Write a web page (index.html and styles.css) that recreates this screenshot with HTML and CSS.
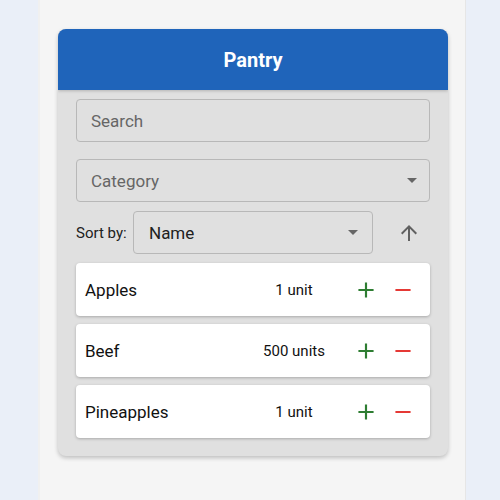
FILE: index.html
```html
<!DOCTYPE html>
<html>
<head>
<meta charset="utf-8">
<link rel="stylesheet" href="styles.css">
</head>
<body>
<div class="page">
  <div class="column">
    <div class="card">
      <div class="header">Pantry</div>
      <div class="body">
        <div class="field"><span class="placeholder">Search</span></div>
        <div class="field select"><span class="placeholder">Category</span><span class="caret"></span></div>
        <div class="sortrow">
          <span class="sortlabel">Sort by:</span>
          <div class="field select sortselect"><span class="value">Name</span><span class="caret"></span></div>
          <div class="arrowbtn">
            <svg width="24" height="24" viewBox="0 0 24 24"><path fill="#616161" d="M4 12l1.41 1.41L11 7.830V20h2V7.83l5.58 5.59L20 12l-8-8-8 8z"/></svg>
          </div>
        </div>
        <div class="item">
          <span class="name">Apples</span>
          <span class="qty">1 unit</span>
          <span class="btn"><svg width="26" height="26" viewBox="0 0 24 24"><path fill="#2e7d32" d="M19 13h-6v6h-2v-6H5v-2h6V5h2v6h6v2z"/></svg></span>
          <span class="btn"><svg width="26" height="26" viewBox="0 0 24 24"><path fill="#e53935" d="M19 13H5v-2h14v2z"/></svg></span>
        </div>
        <div class="item">
          <span class="name">Beef</span>
          <span class="qty">500 units</span>
          <span class="btn"><svg width="26" height="26" viewBox="0 0 24 24"><path fill="#2e7d32" d="M19 13h-6v6h-2v-6H5v-2h6V5h2v6h6v2z"/></svg></span>
          <span class="btn"><svg width="26" height="26" viewBox="0 0 24 24"><path fill="#e53935" d="M19 13H5v-2h14v2z"/></svg></span>
        </div>
        <div class="item">
          <span class="name">Pineapples</span>
          <span class="qty">1 unit</span>
          <span class="btn"><svg width="26" height="26" viewBox="0 0 24 24"><path fill="#2e7d32" d="M19 13h-6v6h-2v-6H5v-2h6V5h2v6h6v2z"/></svg></span>
          <span class="btn"><svg width="26" height="26" viewBox="0 0 24 24"><path fill="#e53935" d="M19 13H5v-2h14v2z"/></svg></span>
        </div>
      </div>
    </div>
  </div>
</div>
</body>
</html>
```
FILE: styles.css
```css
html, body {
  margin: 0;
  padding: 0;
  height: 100%;
}
body {
  background: #eaeff8;
  font-family: Roboto, "Liberation Sans", sans-serif;
}
.page {
  display: flex;
  height: 100%;
}
.column {
  margin-left: 38px;
  width: 428px;
  background: #f5f5f5;
  border-left: 2px solid #f0f0f0;
  border-right: 1px solid #e6e6e6;
  padding: 29px 17px 0 18px;
  box-sizing: border-box;
}
.card {
  border-radius: 8px;
  overflow: hidden;
  background: #e0e0e0;
  box-shadow: 0 2px 4px rgba(0,0,0,0.22);
}
.header {
  background: #1f64ba;
  color: #fff;
  font-weight: 700;
  font-size: 20px;
  height: 61px;
  display: flex;
  align-items: center;
  justify-content: center;
  box-shadow: 0 1px 3px rgba(0,0,0,0.2);
  position: relative;
}
.body {
  padding: 9px 18px 18px 18px;
  display: flex;
  flex-direction: column;
}
.field {
  height: 43px;
  border: 1px solid #b8b8b8;
  border-radius: 4px;
  box-sizing: border-box;
  display: flex;
  align-items: center;
  padding: 0 14px;
  font-size: 17px;
}
.field + .field {
  margin-top: 17px;
}
.placeholder {
  color: #666;
  flex: 1;
}
.value {
  color: #212121;
  flex: 1;
}
.caret {
  width: 0;
  height: 0;
  border-left: 5px solid transparent;
  border-right: 5px solid transparent;
  border-top: 5px solid #666;
  margin-right: -2px;
}
.sortrow {
  display: flex;
  align-items: center;
  margin-top: 9px;
  margin-bottom: 9px;
}
.sortlabel {
  font-size: 15px;
  color: #212121;
  width: 57px;
}
.sortselect {
  width: 240px;
  padding-left: 15px;
  padding-right: 16px;
}
.arrowbtn {
  flex: 1;
  display: flex;
  justify-content: center;
  padding-left: 14px;
}
.item {
  background: #fff;
  border-radius: 4px;
  height: 53px;
  box-shadow: 0 1px 3px rgba(0,0,0,0.25);
  display: flex;
  align-items: center;
  padding: 0 9px;
  margin-bottom: 8px;
}
.item:last-child {
  margin-bottom: 0;
}
.name {
  flex: 1;
  font-size: 17px;
  color: #111;
}
.qty {
  width: 90px;
  margin-right: 8px;
  text-align: center;
  font-size: 15px;
  color: #111;
}
.btn {
  width: 37px;
  display: flex;
  justify-content: center;
  align-items: center;
}
```
